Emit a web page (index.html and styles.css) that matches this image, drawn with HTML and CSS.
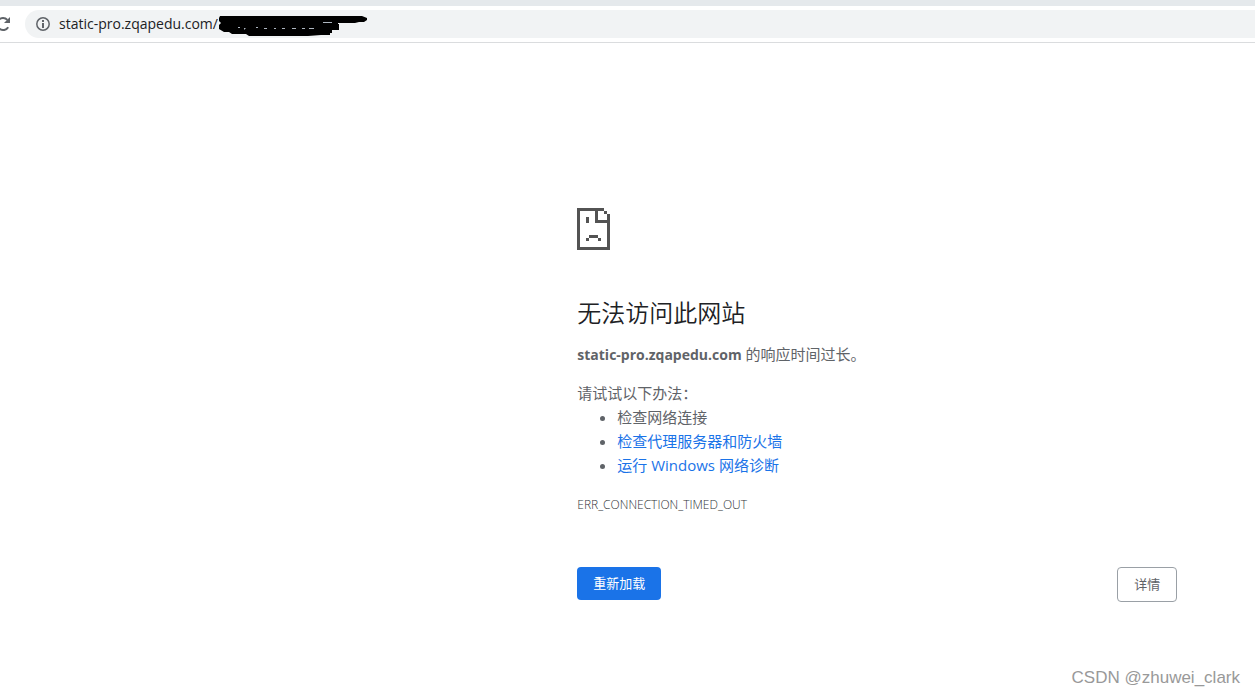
FILE: index.html
```html
<!DOCTYPE html>
<html lang="zh-CN">
<head>
<meta charset="utf-8">
<title>static-pro.zqapedu.com</title>
<link rel="stylesheet" href="styles.css">
</head>
<body>
<header class="browser">
  <div class="tabstrip"></div>
  <div class="toolbar">
    <button class="reload" type="button" aria-label="重新加载此页">
      <svg width="16" height="16" viewBox="0 0 16 16"><path d="M13.2 11.2A6 6 0 1 1 12.4 3.9" fill="none" stroke="#5f6368" stroke-width="2"/><path d="M15 1v6H9z" fill="#5f6368"/></svg>
    </button>
    <div class="omnibox">
      <svg class="info" width="14" height="14" viewBox="0 0 14 14"><circle cx="7" cy="7" r="6.2" fill="none" stroke="#5f6368" stroke-width="1.5"/><path d="M6 3h2v2H6zM6 6h2v5H6z" fill="#5f6368"/></svg>
      <input class="url" type="text" aria-label="地址" value="static-pro.zqapedu.com/">
      <svg class="scribble" width="150" height="22" viewBox="0 0 150 22"><path d="M2 1H144L149 3V5L146 7H141L137 8H120V9H121V15H114V18H112V20H103L90 21H31L28 19H14L11 17H6L1 14V10L3 8L1 6V3Z"/><path d="M20 12h2v1h-2zM26 13h2l-2 2zM38 12h2v1h-2zM46 13h3v1h-3zM56 13h2v1h-2zM64 13h3v1h-3zM74 13h4v1h-4zM84 13h3v1h-3zM91 13h5v1h-5zM105 7h9v1h-9z" fill="#aeb6c0"/></svg>
    </div>
  </div>
</header>
<main class="page">
  <div class="error">
    <svg class="sad" width="33" height="42" viewBox="0 0 11 14" shape-rendering="crispEdges"><path d="M0 0H9V1H7V4H10V2H11V14H0ZM1 1V13H10V5H6V1ZM9 1h1v1H9zM3 3h1v2H3zM4 9h3v1H4zM3 10h1v1H3zM7 10h1v1H7z" fill="#535353" fill-rule="evenodd"/></svg>
    <h1 class="title">无法访问此网站</h1>
    <p class="summary"><strong>static-pro.zqapedu.com</strong> 的响应时间过长。</p>
    <p class="hint">请试试以下办法：</p>
    <ul class="tips">
      <li>检查网络连接</li>
      <li><a href="#proxy">检查代理服务器和防火墙</a></li>
      <li><a href="#diagnose">运行 Windows 网络诊断</a></li>
    </ul>
    <p class="code">ERR_CONNECTION_TIMED_OUT</p>
    <div class="actions">
      <button class="btn primary" type="button">重新加载</button>
      <button class="btn details" type="button">详情</button>
    </div>
  </div>
</main>
<footer class="watermark">CSDN @zhuwei_clark</footer>
</body>
</html>
```
FILE: styles.css
```css
* { box-sizing: border-box; }
body {
  margin: 0;
  min-height: 100vh;
  display: flex;
  flex-direction: column;
  background: #fff;
  color: #5f6368;
  font-family: "Open Sans", "Noto Sans CJK SC", sans-serif;
  font-size: 15px;
  line-height: 24px;
}
.browser { border-bottom: 1px solid #dadcde; }
.tabstrip { height: 6px; background: #e5e9ec; }
.toolbar {
  display: flex;
  align-items: center;
  height: 36px;
  overflow: hidden;
}
.reload {
  flex: none;
  width: 16px;
  height: 16px;
  margin: 0 14px 0 -5px;
  padding: 0;
  border: 0;
  background: none;
}
.reload svg { display: block; }
.omnibox {
  position: relative;
  flex: 1;
  display: flex;
  align-items: center;
  height: 28px;
  padding-left: 11px;
  background: #f1f3f4;
  border-radius: 14px 0 0 14px;
}
.info { flex: none; }
.url {
  flex: 1;
  margin-left: 9px;
  padding: 0;
  border: 0;
  outline: 0;
  background: none;
  color: #202124;
  font: 14px/20px "Open Sans", sans-serif;
}
.scribble { position: absolute; left: 193px; top: 5px; }
.page { flex: 1; padding: 165px 24px 0 46%; }
.error { max-width: 600px; }
.sad { display: block; }
.title {
  margin: 48px 0 15px;
  color: #202124;
  font-size: 24px;
  font-weight: 350;
  line-height: 29px;
}
.summary, .hint, .code { margin: 0; }
.summary { margin-bottom: 14px; }
.summary strong { font-size: 14px; font-weight: 700; }
.tips { margin: 0; padding-left: 40px; }
.tips a { color: #1a73e8; text-decoration: none; }
.code {
  margin-top: 16px;
  color: #303338;
  font-size: 12px;
  font-weight: 300;
}
.actions {
  display: flex;
  justify-content: space-between;
  align-items: flex-start;
  margin-top: 50px;
}
.btn {
  padding: 0 16px;
  border: 0;
  border-radius: 4px;
  font: 13px/33px "Open Sans", "Noto Sans CJK SC", sans-serif;
}
.primary { background: #1a73e8; color: #fff; }
.details { border: 1px solid #9aa0a6; background: #fff; color: #5f6368; }
.watermark {
  padding: 0 15px 6px;
  color: #999;
  font: 17px/24px "Liberation Sans", Arial, sans-serif;
  text-align: right;
}
```
